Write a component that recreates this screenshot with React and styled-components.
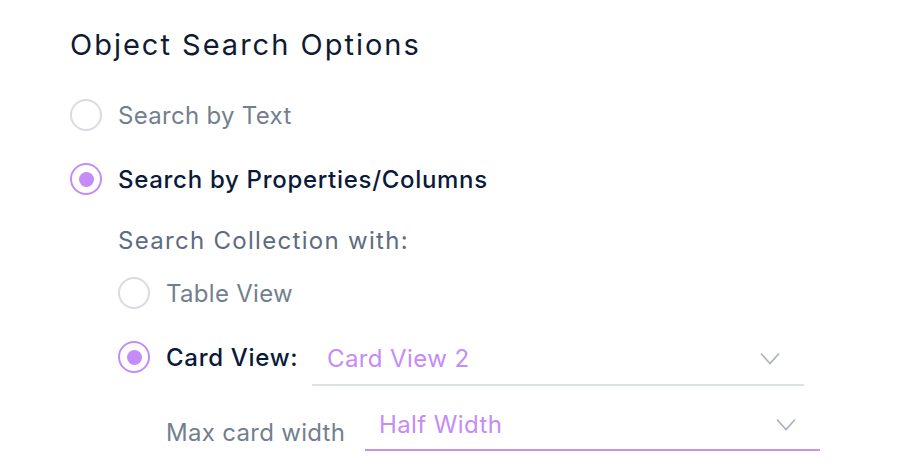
import React from "react";
import styled, { createGlobalStyle } from "styled-components";

const Global = createGlobalStyle`
  html, body { margin: 0; padding: 0; background: #ffffff; }
  body { font-family: Inter, "Noto Sans", sans-serif; }
`;

const Page = styled.div`
  padding: 26px 0 0 70px;
  width: 910px;
  height: 474px;
  box-sizing: border-box;
  overflow: hidden;
`;

const Title = styled.h2`
  margin: 0 0 19px 0;
  font-size: 29px;
  font-weight: 400;
  letter-spacing: 2px;
  color: #0f1b33;
  line-height: 38px;
  white-space: nowrap;
`;

const Group = styled.div`
  display: flex;
  flex-direction: column;
  padding-left: ${(p) => p.$indent || 0}px;
`;

const Row = styled.div`
  display: flex;
  align-items: center;
  height: 64px;
  margin-top: ${(p) => p.$mt || 0}px;
  padding-left: ${(p) => p.$pl || 0}px;
`;

const Radio = styled.span`
  width: 32px;
  height: 32px;
  box-sizing: border-box;
  border-radius: 50%;
  border: 2px solid ${(p) => (p.$checked ? "#c48cf8" : "#d9dbe0")};
  display: flex;
  align-items: center;
  justify-content: center;
  flex-shrink: 0;
  margin-right: 16px;
  &::after {
    content: "";
    display: ${(p) => (p.$checked ? "block" : "none")};
    width: 15px;
    height: 15px;
    border-radius: 50%;
    background: #c48cf8;
  }
`;

const Label = styled.span`
  font-size: 24px;
  color: ${(p) => (p.$active ? "#0b1a3c" : "#737f8e")};
  font-weight: ${(p) => (p.$active ? 500 : 400)};
  letter-spacing: ${(p) => (p.$active ? 0.7 : 0.3)}px;
  white-space: nowrap;
  flex-shrink: 0;
  width: ${(p) => (p.$w ? `${p.$w}px` : "auto")};
`;

const Caption = styled.div`
  font-size: 24px;
  color: #5d6c81;
  letter-spacing: 1.3px;
  height: 42px;
  margin-top: 8px;
  display: flex;
  align-items: center;
  white-space: nowrap;
`;

const Select = styled.div`
  display: flex;
  align-items: center;
  justify-content: space-between;
  width: ${(p) => p.$w}px;
  height: ${(p) => p.$h}px;
  box-sizing: border-box;
  margin-top: ${(p) => p.$mt || 0}px;
  margin-bottom: ${(p) => p.$mb || 0}px;
  padding: 0 24px 0 ${(p) => p.$pl}px;
  border-bottom: 2px solid ${(p) => (p.$focus ? "#c590f7" : "#dde2e7")};
  color: #c48cf8;
  font-size: 24px;
  letter-spacing: 0.4px;
  white-space: nowrap;
  flex-shrink: 0;
`;

const Chevron = () => (
  <svg width="20" height="13" viewBox="0 0 20 13" fill="none">
    <path d="M1 1.5 L10 11.5 L19 1.5" stroke="#a7b0bc" strokeWidth="1.6" />
  </svg>
);

export default function App() {
  return (
    <>
      <Global />
      <Page>
        <Title>Object Search Options</Title>
        <Group>
          <Row>
            <Radio />
            <Label>Search by Text</Label>
          </Row>
          <Row>
            <Radio $checked />
            <Label $active>Search by Properties/Columns</Label>
          </Row>
        </Group>
        <Group $indent={48}>
          <Caption>Search Collection with:</Caption>
          <Row>
            <Radio />
            <Label>Table View</Label>
          </Row>
          <Row>
            <Radio $checked />
            <Label $active $w={146}>Card View:</Label>
            <Select $w={492} $h={54} $mt={4} $pl={15}>
              <span>Card View 2</span>
              <Chevron />
            </Select>
          </Row>
          <Row $mt={11} $pl={48}>
            <Label $w={199}>Max card width</Label>
            <Select $w={455} $h={52} $mb={14} $pl={14} $focus>
              <span>Half Width</span>
              <Chevron />
            </Select>
          </Row>
        </Group>
      </Page>
    </>
  );
}
